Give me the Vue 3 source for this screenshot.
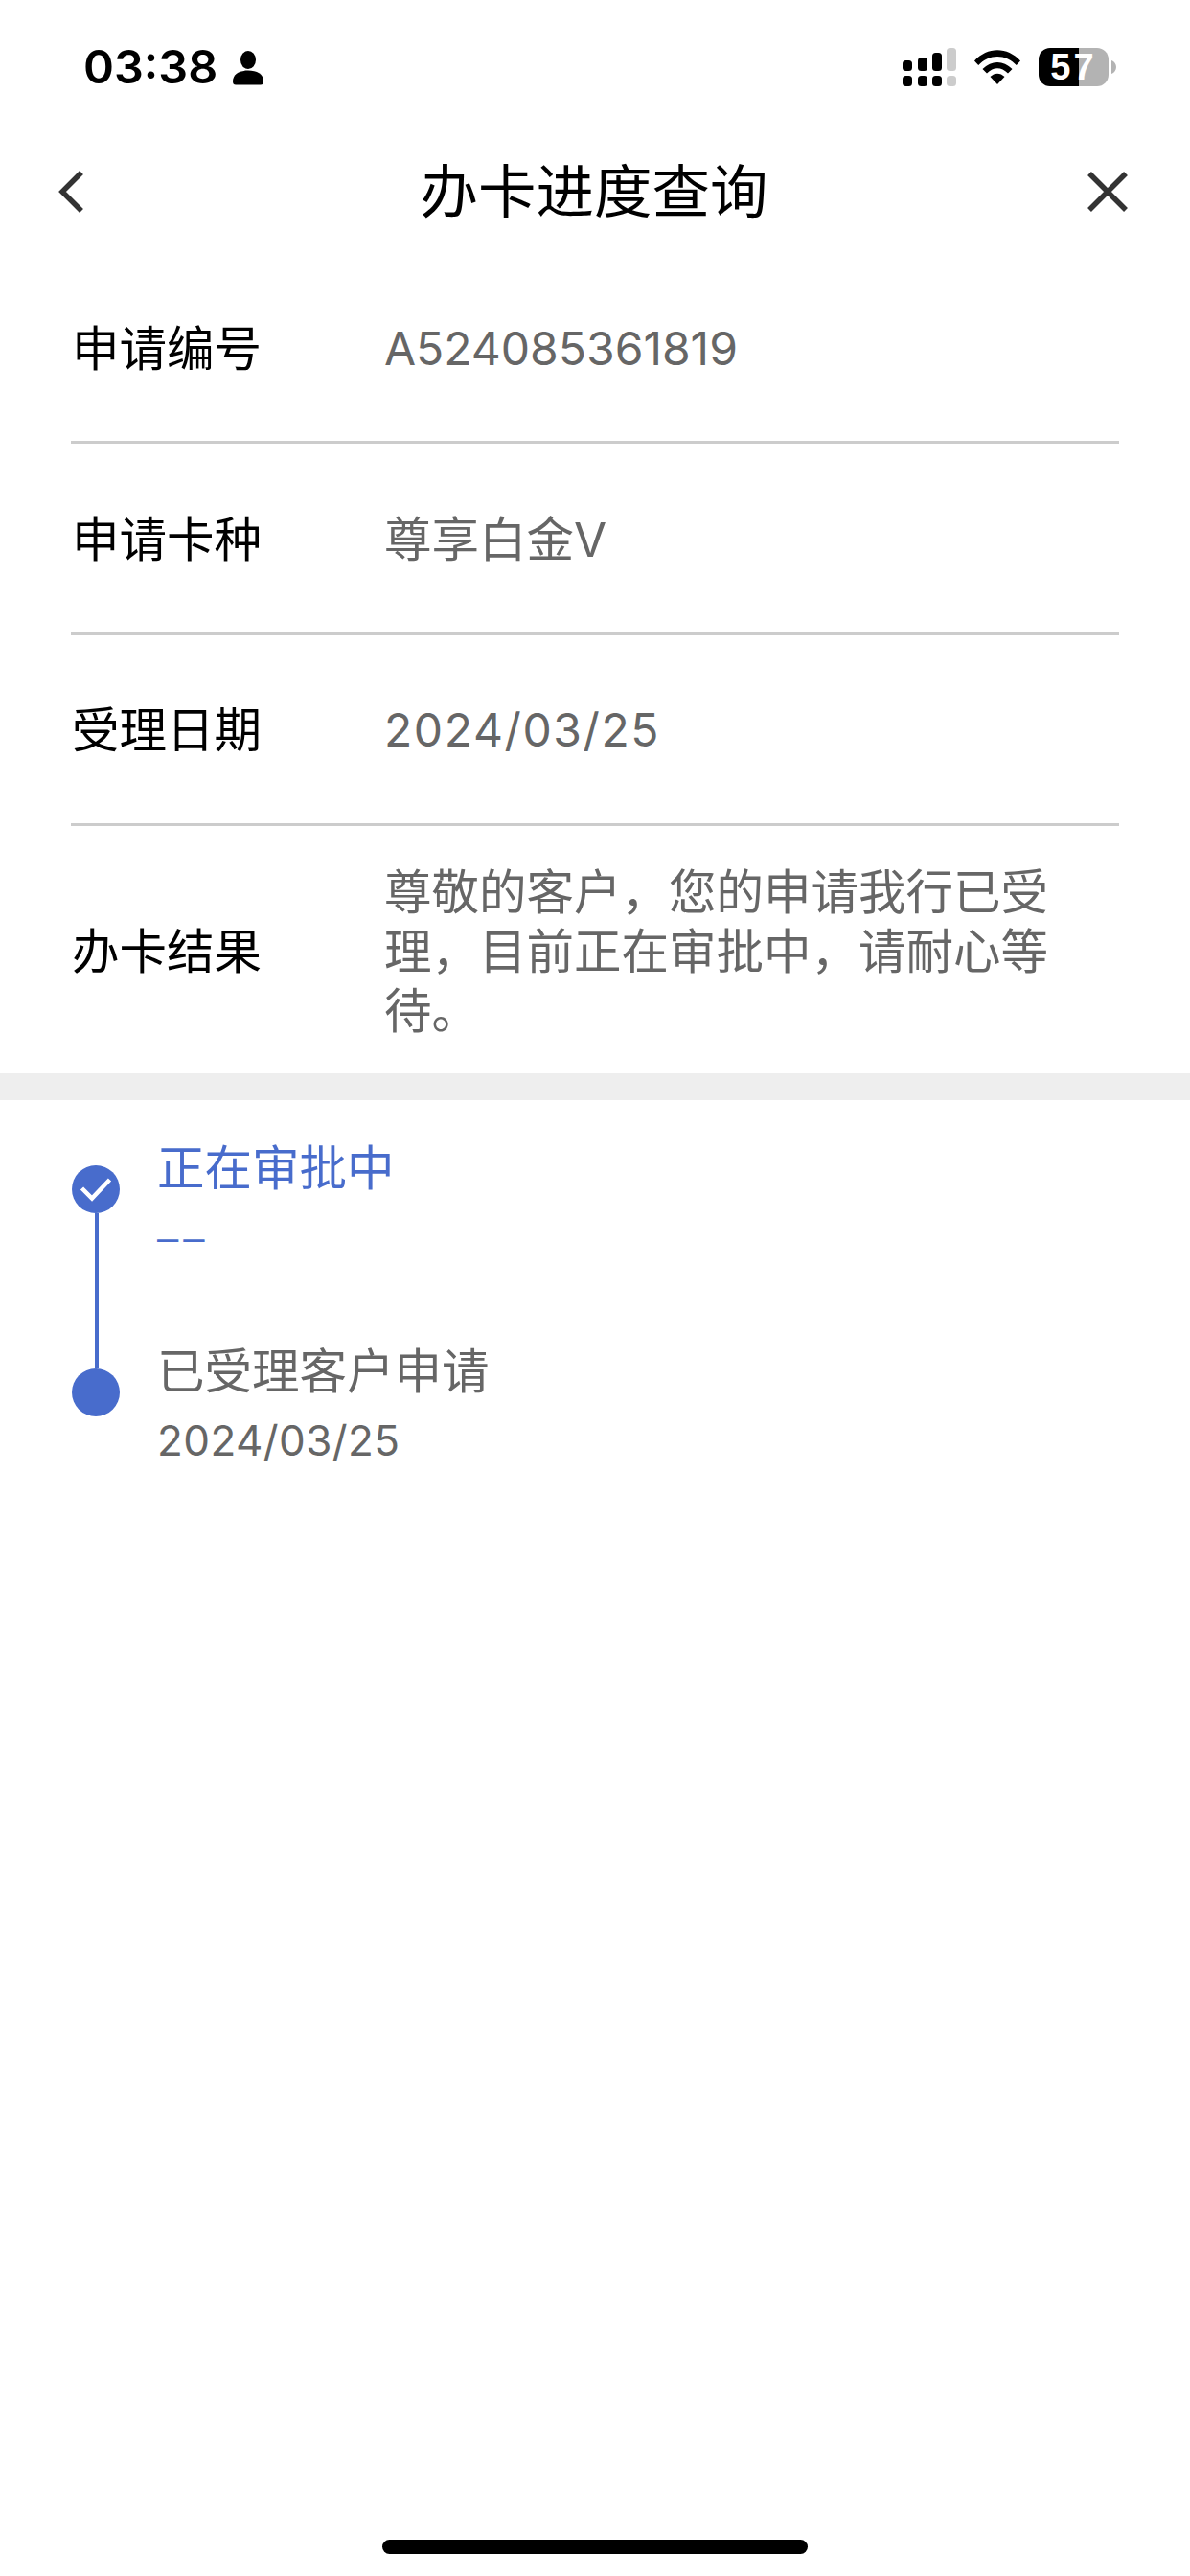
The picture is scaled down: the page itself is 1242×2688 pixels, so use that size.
<script setup>
const rows = [
  { label: '申请编号', value: 'A524085361819', kind: 'value-code' },
  { label: '申请卡种', value: '尊享白金V', kind: '' },
  { label: '受理日期', value: '2024/03/25', kind: 'value-code value-date' },
]
</script>

<template>
  <div class="page">
    <div class="status">
      <div class="status-left">
        <span class="time">03:38</span>
        <svg class="person" width="32" height="36" viewBox="0 0 32 36">
          <ellipse cx="16" cy="9.5" rx="8" ry="9.5" fill="#000" />
          <path d="M0 32C0 24 7 20.5 16 20.5S32 24 32 32C32 34.5 31 35.5 29 35.5H3C1 35.5 0 34.5 0 32Z" fill="#000" />
        </svg>
      </div>
      <div class="status-right">
        <svg width="56" height="40" viewBox="0 0 56 40">
          <rect x="0" y="13" width="10" height="11" rx="3.5" fill="#000" />
          <rect x="16" y="10" width="10" height="14" rx="3.5" fill="#000" />
          <rect x="31" y="5" width="10" height="19" rx="3.5" fill="#000" />
          <rect x="46" y="0" width="10" height="24" rx="3.5" fill="#ccc" />
          <rect x="0" y="29" width="10" height="11" rx="3.5" fill="#000" />
          <rect x="16" y="29" width="10" height="11" rx="3.5" fill="#000" />
          <rect x="31" y="29" width="10" height="11" rx="3.5" fill="#000" />
          <rect x="46" y="29" width="10" height="11" rx="3.5" fill="#ccc" />
        </svg>
        <svg class="wifi" width="48" height="36" viewBox="0 0 48 36">
          <path d="M0 11.5C13.5 -3.5 34.5 -3.5 48 11.5L43.8 16C32.5 4 15.5 4 4.200 16Z" fill="#000" />
          <path d="M8.500 20C18 10.500 30 10.500 39.500 20L35 24.500C28 17.500 20 17.500 13 24.500Z" fill="#000" />
          <path d="M16.500 28C21 23.500 27 23.500 31.500 28L24 36Z" fill="#000" />
        </svg>
        <div class="battery">
          <div class="battery-body">
            <span class="battery-text">57</span>
          </div>
          <svg class="battery-cap" width="5" height="14" viewBox="0 0 5 14">
            <path d="M0 0C3 1 5 4 5 7S3 13 0 14Z" fill="#b3b3b3" />
          </svg>
        </div>
      </div>
    </div>

    <div class="nav">
      <svg class="nav-back" width="28" height="46" viewBox="0 0 28 46">
        <path d="M25 3L5 23L25 43" fill="none" stroke="#333" stroke-width="5.500" />
      </svg>
      <h1 class="nav-title">办卡进度查询</h1>
      <svg class="nav-close" width="44" height="44" viewBox="0 0 44 44">
        <path d="M3 3L41 41M41 3L3 41" fill="none" stroke="#333" stroke-width="5.500" />
      </svg>
    </div>

    <div class="info">
      <div v-for="row in rows" :key="row.label" class="row">
        <span class="label">{{ row.label }}</span>
        <span class="value" :class="row.kind">{{ row.value }}</span>
      </div>
      <div class="row row-last">
        <span class="label">办卡结果</span>
        <span class="value value-multi">尊敬的客户，您的申请我行已受理，目前正在审批中，请耐心等待。</span>
      </div>
    </div>

    <div class="band"></div>

    <div class="timeline">
      <div class="step step-active">
        <div class="rail">
          <div class="dot">
            <svg width="34" height="26" viewBox="0 0 34 26">
              <path d="M2.500 12L13 22.500L31.500 3" fill="none" stroke="#fff" stroke-width="4.500" />
            </svg>
          </div>
          <div class="rail-line"></div>
        </div>
        <div class="step-body">
          <div class="step-title">正在审批中</div>
          <div class="step-date step-dash">––</div>
        </div>
      </div>
      <div class="step">
        <div class="rail">
          <div class="dot"></div>
        </div>
        <div class="step-body">
          <div class="step-title">已受理客户申请</div>
          <div class="step-date">2024/03/25</div>
        </div>
      </div>
    </div>

    <div class="home-indicator"></div>
  </div>
</template>

<style>
html, body { margin: 0; background: #fff; }
</style>

<style scoped>
.page {
  position: relative;
  width: 1242px;
  height: 2688px;
  overflow: hidden;
  background: #fff;
  font-family: "Inter", "Noto Sans CJK SC", sans-serif;
}
.status {
  height: 136px;
  padding: 50px 77px 0 87px;
  box-sizing: border-box;
  display: flex;
  justify-content: space-between;
  align-items: flex-start;
}
.status-left {
  display: flex;
  align-items: center;
  gap: 16px;
  height: 40px;
}
.time {
  font-size: 48.500px;
  font-weight: 600;
  line-height: 40px;
  color: #000;
}
.person { margin-top: 2px; }
.status-right {
  display: flex;
  align-items: flex-start;
  gap: 19px;
}
.wifi { margin-top: 2px; }
.battery { display: flex; align-items: center; gap: 3px; }
.battery-body {
  width: 73px;
  height: 40px;
  border-radius: 12px;
  background: linear-gradient(90deg, #000 0 42px, #b3b3b3 42px 73px);
  display: flex;
  align-items: center;
  justify-content: center;
}
.battery-text {
  font-family: "Liberation Sans", sans-serif;
  font-size: 38px;
  font-weight: 700;
  line-height: 40px;
  letter-spacing: 3px;
  color: #fff;
}
.nav {
  height: 128px;
  padding: 0 64px 0 60px;
  box-sizing: border-box;
  display: flex;
  align-items: center;
  justify-content: space-between;
}
.nav-title {
  flex: 1;
  margin: 0;
  padding-left: 18px;
  font-size: 60.500px;
  font-weight: 400;
  line-height: 80px;
  text-align: center;
  color: #000;
}
.info { padding: 0 74px; }
.row {
  height: 199.500px;
  padding-top: 3px;
  box-sizing: border-box;
  border-bottom: 3px solid #ccc;
  display: flex;
  align-items: center;
}
.row:first-child { height: 199px; }
.row-last { height: 258px; padding-top: 3px; border-bottom: 0; }
.label {
  flex: 0 0 326px;
  padding-left: 1px;
  font-size: 49.500px;
  line-height: 62px;
  color: #000;
}
.value {
  font-size: 49.500px;
  line-height: 62px;
  color: #666;
}
.value-code { font-size: 48px; }
.value-date { letter-spacing: 1.600px; }
.value-multi { width: 700px; }
.band { height: 28px; background: #eee; }
.timeline { padding: 41px 0 0 75px; }
.step {
  display: flex;
  gap: 39px;
}
.step-active { height: 212px; }
.rail {
  position: relative;
  flex: 0 0 50px;
  padding-top: 27px;
}
.dot {
  width: 50px;
  height: 50px;
  border-radius: 50%;
  background: #486ccc;
  display: flex;
  align-items: center;
  justify-content: center;
}
.rail-line {
  width: 3.500px;
  height: 162px;
  margin-left: 24px;
  background: #486ccc;
}
.step-title {
  font-size: 49.500px;
  line-height: 60px;
  color: #666;
}
.step-active .step-title { color: #486ccc; }
.step-date {
  margin-top: 12px;
  font-size: 44px;
  line-height: 60px;
  letter-spacing: 0.400px;
  color: #666;
}
.step-dash {
  font-family: "Liberation Sans", sans-serif;
  font-size: 40px;
  letter-spacing: 5px;
  color: #486ccc;
}
.home-indicator {
  position: absolute;
  left: 399px;
  top: 2650px;
  width: 444px;
  height: 15px;
  border-radius: 8px;
  background: #000;
}
</style>
